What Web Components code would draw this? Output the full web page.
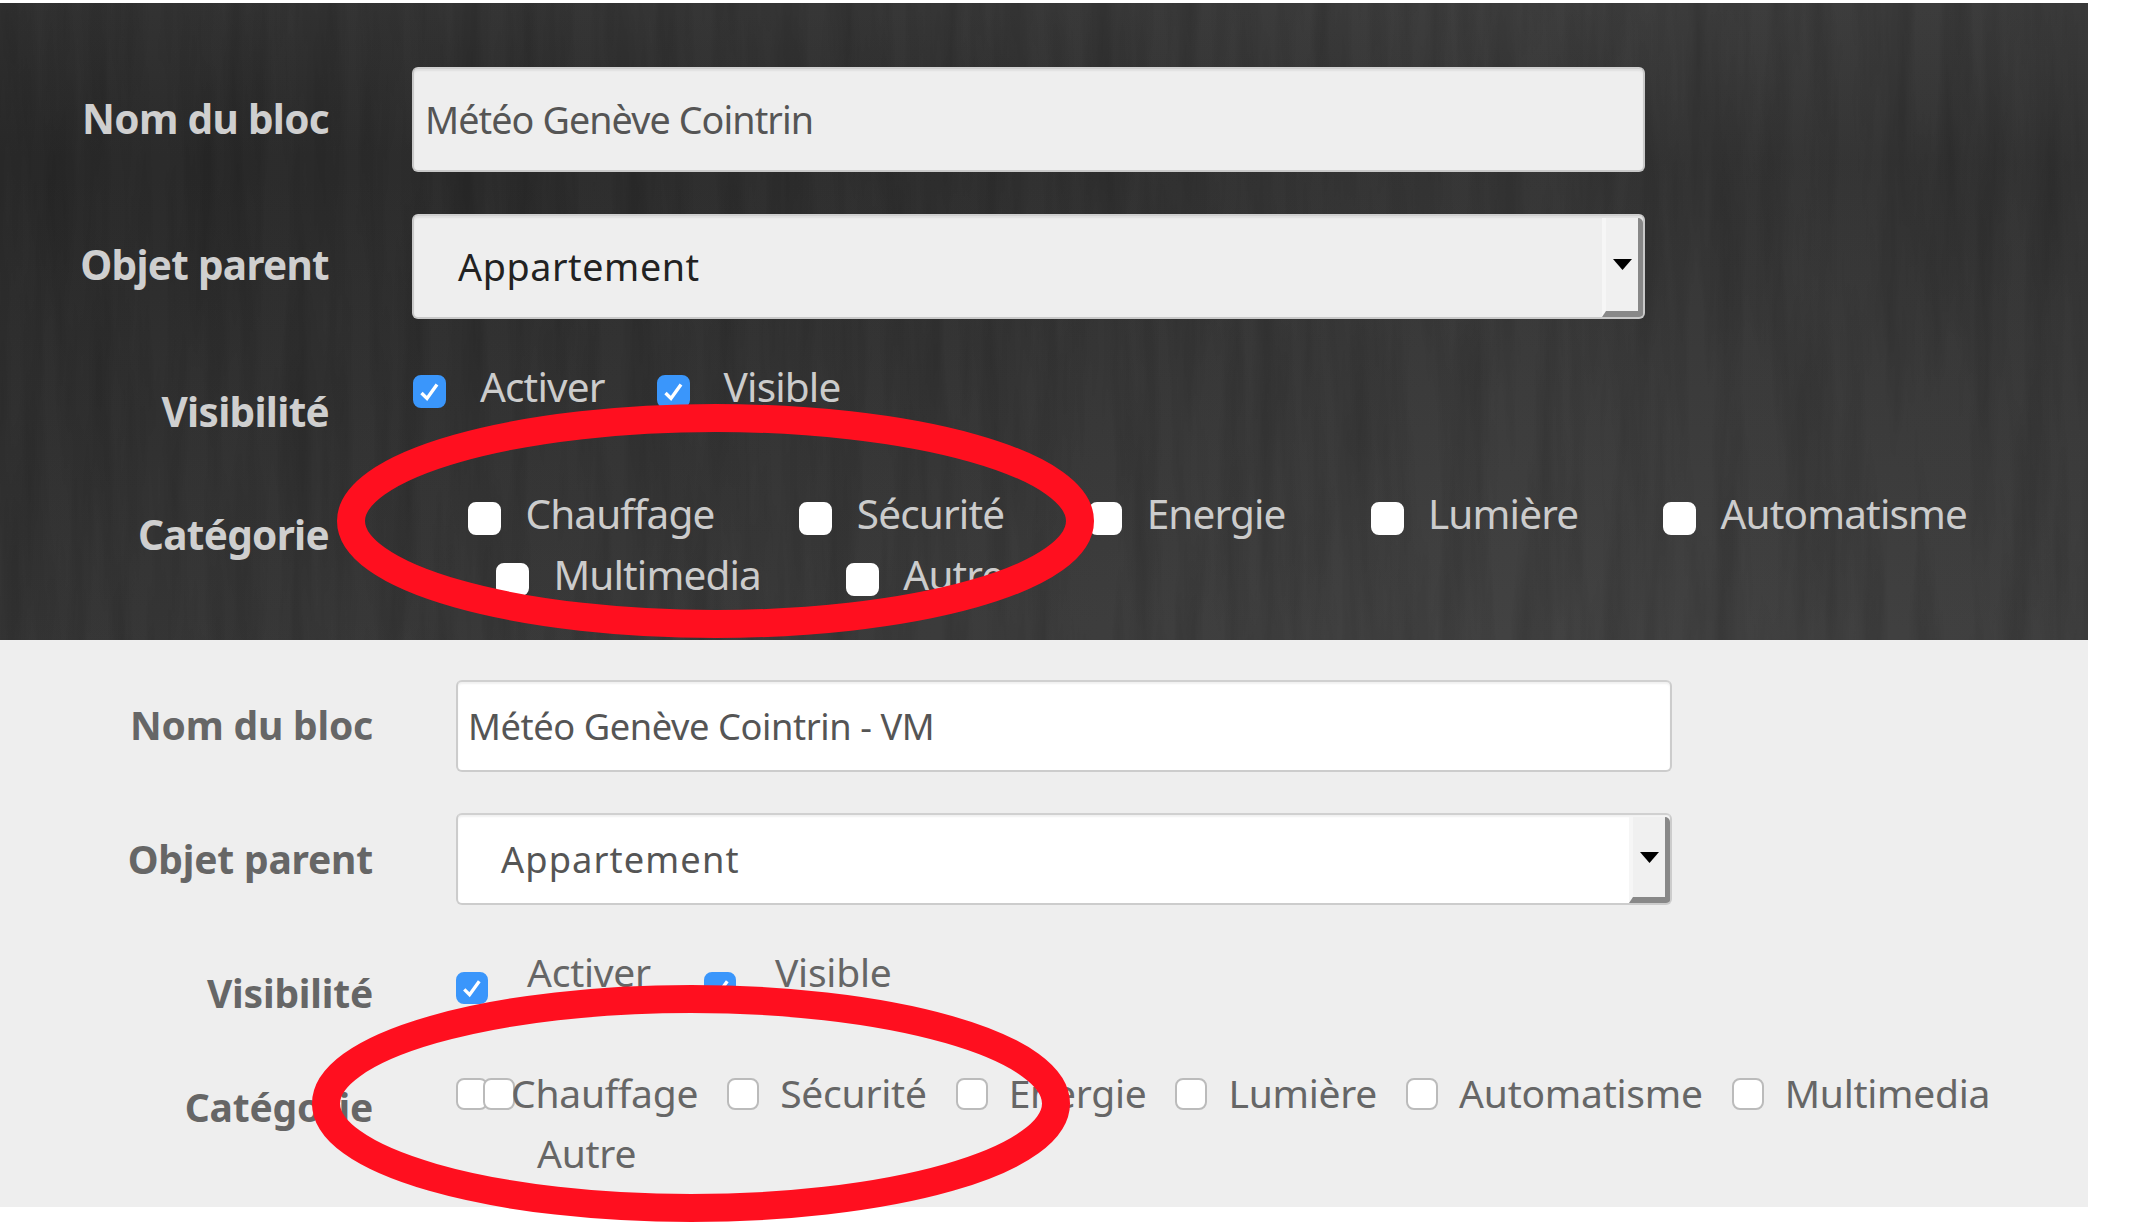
<!DOCTYPE html>
<html lang="fr">
<head>
<meta charset="utf-8">
<title>Bloc</title>
<style>
  html, body { margin: 0; background: #fff; }
  body { font-family: "Noto Sans", "Open Sans", sans-serif; padding-top: 3px; height: 1223px; overflow: hidden; }
</style>
</head>
<body>
<form-panel variant="dark">
  <form-row label="Nom du bloc" label-shift="-1"><text-field>Météo Genève Cointrin</text-field></form-row>
  <form-row label="Objet parent" gap="42" label-shift="-2"><select-field>Appartement</select-field></form-row>
  <form-row label="Visibilité" gap="44" label-shift="-4" height="127">
    <check-row style="--item-gap:52px;--item-inner:34px;padding-left:1px">
      <check-item checked>Activer</check-item>
      <check-item checked>Visible</check-item>
    </check-row>
  </form-row>
  <form-row label="Catégorie" label-shift="-8" height="137">
    <check-row inset="56">
      <check-item>Chauffage</check-item>
      <check-item>Sécurité</check-item>
      <check-item>Energie</check-item>
      <check-item>Lumière</check-item>
      <check-item>Automatisme</check-item>
    </check-row>
    <check-row inset="84">
      <check-item>Multimedia</check-item>
      <check-item>Autre</check-item>
    </check-row>
  </form-row>
  <ring-mark x="337" y="337" w="757" h="234"></ring-mark>
</form-panel>
<form-panel variant="light">
  <form-row label="Nom du bloc" label-shift="-1"><text-field>Météo Genève Cointrin - VM</text-field></form-row>
  <form-row label="Objet parent" gap="41" label-shift="0"><select-field>Appartement</select-field></form-row>
  <form-row label="Visibilité" gap="43" label-shift="-1" height="121">
    <check-row style="--item-gap:53px;--item-inner:39px;--box-top:24px">
      <check-item checked>Activer</check-item>
      <check-item checked>Visible</check-item>
    </check-row>
  </form-row>
  <form-row label="Catégorie" label-shift="-8" height="124">
    <check-row style="--box-top:9px;height:60px">
      <check-item double>Chauffage</check-item>
      <check-item>Sécurité</check-item>
      <check-item>Energie</check-item>
      <check-item>Lumière</check-item>
      <check-item>Automatisme</check-item>
      <check-item>Multimedia</check-item>
    </check-row>
    <check-row inset="81">
      <check-item nobox>Autre</check-item>
    </check-row>
  </form-row>
  <ring-mark x="312" y="305" w="758" h="237"></ring-mark>
</form-panel>

<script>
class FormPanel extends HTMLElement {
  constructor() {
    super();
    this.attachShadow({mode: 'open'}).innerHTML = `
      <style>
        :host { display: block; position: relative; box-sizing: border-box; width: 2088px; }
        :host([variant=dark]) {
          height: 637px; padding-top: 64px;
          background:
            linear-gradient(180deg, rgba(255,255,255,.03), rgba(0,0,0,.03) 25%, rgba(255,255,255,.05) 100%),
            linear-gradient(90deg, #2b2b2b 0%, #313131 45%, #383838 72%, #353535 100%);
          --font: 40.5px; --label-w: 329px; --col-gap: 83px; --ctl-w: 1233px;
          --label: #cfcfcf; --text: #cccccc; --field: #eeeeee; --field-text: #555555; --select-text: #222222;
          --field-edge: #c9c9c9; --btn: #f0f0f0; --box: #ffffff; --box-edge: #ffffff; --item-gap: 85px;
          --item-inner: 24.4px; --box-size: 33px; --row-h: 105px; --field-pad: 11px; --select-pad: 44px;
          --ls: -0.85px; --label-ls: -0.7px; --input-ls: -0.9px; --select-ls: 0.6px; --box-top: 12px;
        }
        :host([variant=light]) {
          height: 567px; padding-top: 40px; background: #eeeeee;
          --font: 39px; --label-w: 373px; --col-gap: 83px; --ctl-w: 1216px;
          --label: #666666; --text: #666666; --field: #ffffff; --field-text: #555555; --select-text: #555555;
          --field-edge: #cccccc; --btn: #f0f0f0; --box: #ffffff; --box-edge: #bbbbbb; --item-gap: 29px;
          --item-inner: 21px; --box-size: 32px; --row-h: 92px; --field-pad: 10px; --select-pad: 43px;
          --ls: -0.25px; --label-ls: -0.2px; --input-ls: -0.42px; --select-ls: 1.1px; --box-top: 12px;
        }
        .wood { position: absolute; inset: 0; width: 100%; height: 100%; display: none; }
        :host([variant=dark]) .wood { display: block; }
        .body { position: relative; }
      </style>
      <svg class="wood" aria-hidden="true">
        <filter id="grain" x="0" y="0" width="100%" height="100%">
          <feTurbulence type="fractalNoise" baseFrequency="0.035 0.003" numOctaves="4" seed="7"/>
          <feColorMatrix values="0 0 0 0 0  0 0 0 0 0  0 0 0 0 0  1.6 0 0 0 -0.62"/>
        </filter>
        <rect width="100%" height="100%" filter="url(#grain)" opacity="0.18"/>
      </svg>
      <div class="body"><slot></slot></div>`;
  }
}

class FormRow extends HTMLElement {
  constructor() {
    super();
    this.attachShadow({mode: 'open'}).innerHTML = `
      <style>
        :host { display: grid; grid-template-columns: var(--label-w) var(--ctl-w); column-gap: var(--col-gap); }
        .label {
          font-size: var(--font); font-weight: 700; line-height: var(--row-h); color: var(--label);
          text-align: right; white-space: nowrap; letter-spacing: var(--label-ls);
        }
        .control { min-width: 0; }
      </style>
      <div class="label"></div>
      <div class="control"><slot></slot></div>`;
  }

  connectedCallback() {
    const label = this.shadowRoot.querySelector('.label');
    label.textContent = this.getAttribute('label');
    label.style.transform = `translateY(${this.getAttribute('label-shift') || 0}px)`;
    if (this.hasAttribute('gap')) this.style.marginTop = this.getAttribute('gap') + 'px';
    if (this.hasAttribute('height')) this.style.height = this.getAttribute('height') + 'px';
  }
}

class TextField extends HTMLElement {
  constructor() {
    super();
    this.attachShadow({mode: 'open'}).innerHTML = `
      <style>
        :host {
          display: block; box-sizing: border-box; height: var(--row-h); padding-left: var(--field-pad);
          background: var(--field); color: var(--field-text); border-radius: 6px;
          border: 2px solid var(--field-edge); border-top-color: #d0d0d0;
          box-shadow: inset 0 2px 2px rgba(0,0,0,.06);
          font-size: calc(var(--font) * .93); line-height: calc(var(--row-h) - 4px); white-space: nowrap;
          letter-spacing: var(--input-ls);
        }
      </style>
      <slot></slot>`;
  }
}

class SelectField extends HTMLElement {
  constructor() {
    super();
    this.attachShadow({mode: 'open'}).innerHTML = `
      <style>
        :host {
          display: flex; box-sizing: border-box; height: var(--row-h); overflow: hidden;
          background: var(--field); color: var(--select-text); border-radius: 6px;
          border: 2px solid var(--field-edge); border-top-color: #d0d0d0;
          box-shadow: inset 0 2px 2px rgba(0,0,0,.06);
          font-size: calc(var(--font) * .93); white-space: nowrap; letter-spacing: var(--select-ls);
        }
        .value { flex: 1; padding-left: var(--select-pad); line-height: calc(var(--row-h) - 4px); }
        .arrow {
          box-sizing: border-box; width: 41px; margin-top: 2px; display: flex; align-items: center; justify-content: center;
          background: var(--btn); border-left: 4px solid #f6f6f6; border-top-right-radius: 5px;
          border-right: 5px solid #888888; border-bottom: 6px solid #888888;
        }
        svg { display: block; width: 19px; height: 11px; }
      </style>
      <div class="value"><slot></slot></div>
      <div class="arrow"><svg viewBox="0 0 19 11"><path d="M0 0H19L9.5 11Z" fill="#000"/></svg></div>`;
  }
}

class CheckRow extends HTMLElement {
  constructor() {
    super();
    this.attachShadow({mode: 'open'}).innerHTML = `
      <style>
        :host { display: flex; column-gap: var(--item-gap); height: 61px; align-items: flex-start; }
      </style>
      <slot></slot>`;
  }

  connectedCallback() {
    if (this.hasAttribute('inset')) this.style.paddingLeft = this.getAttribute('inset') + 'px';
  }
}

class CheckItem extends HTMLElement {
  constructor() {
    super();
    const boxes = this.hasAttribute('nobox') ? '' :
      this.hasAttribute('double') ? '<span class="box"></span><span class="box second"></span>' : '<span class="box"></span>';
    const tick = '<svg viewBox="0 0 33 33"><path d="M8.5 18l5.5 5.5L24 9.5" fill="none" stroke="#fff" stroke-width="3.4"/></svg>';
    this.attachShadow({mode: 'open'}).innerHTML = `
      <style>
        :host {
          display: flex; align-items: flex-start; color: var(--text); font-size: var(--font);
          line-height: 48px; white-space: nowrap; letter-spacing: var(--ls);
        }
        .box {
          flex: none; box-sizing: border-box; width: var(--box-size); height: var(--box-size); margin-top: var(--box-top);
          background: var(--box); border: 2px solid var(--box-edge); border-radius: 8px;
        }
        .box.on { background: #3a96fb; border-color: #3a96fb; }
        .box svg { display: block; margin: -2px; width: var(--box-size); height: var(--box-size); }
        .second { margin-left: -5px; }
        .text { margin-left: var(--item-inner); }
        :host([double]) .text { margin-left: -4px; }
        :host([nobox]) .text { margin-left: 0; }
      </style>
      ${boxes}<span class="text"><slot></slot></span>`;
    if (this.hasAttribute('checked')) {
      const box = this.shadowRoot.querySelector('.box');
      box.classList.add('on');
      box.innerHTML = tick;
    }
  }
}

class RingMark extends HTMLElement {
  constructor() {
    super();
    this.attachShadow({mode: 'open'}).innerHTML = `
      <style>
        :host { position: absolute; display: block; pointer-events: none; }
        svg { display: block; width: 100%; height: 100%; overflow: visible; }
      </style>
      <svg aria-hidden="true"><ellipse fill="none" stroke="#ff0f1f" stroke-width="28"/></svg>`;
  }

  connectedCallback() {
    const [x, y, w, h] = ['x', 'y', 'w', 'h'].map((k) => +this.getAttribute(k));
    Object.assign(this.style, {left: x + 'px', top: y + 'px', width: w + 'px', height: h + 'px'});
    const e = this.shadowRoot.querySelector('ellipse');
    e.setAttribute('cx', w / 2);
    e.setAttribute('cy', h / 2);
    e.setAttribute('rx', w / 2 - 14);
    e.setAttribute('ry', h / 2 - 14);
  }
}

customElements.define('form-panel', FormPanel);
customElements.define('form-row', FormRow);
customElements.define('text-field', TextField);
customElements.define('select-field', SelectField);
customElements.define('check-row', CheckRow);
customElements.define('check-item', CheckItem);
customElements.define('ring-mark', RingMark);
</script>
</body>
</html>
